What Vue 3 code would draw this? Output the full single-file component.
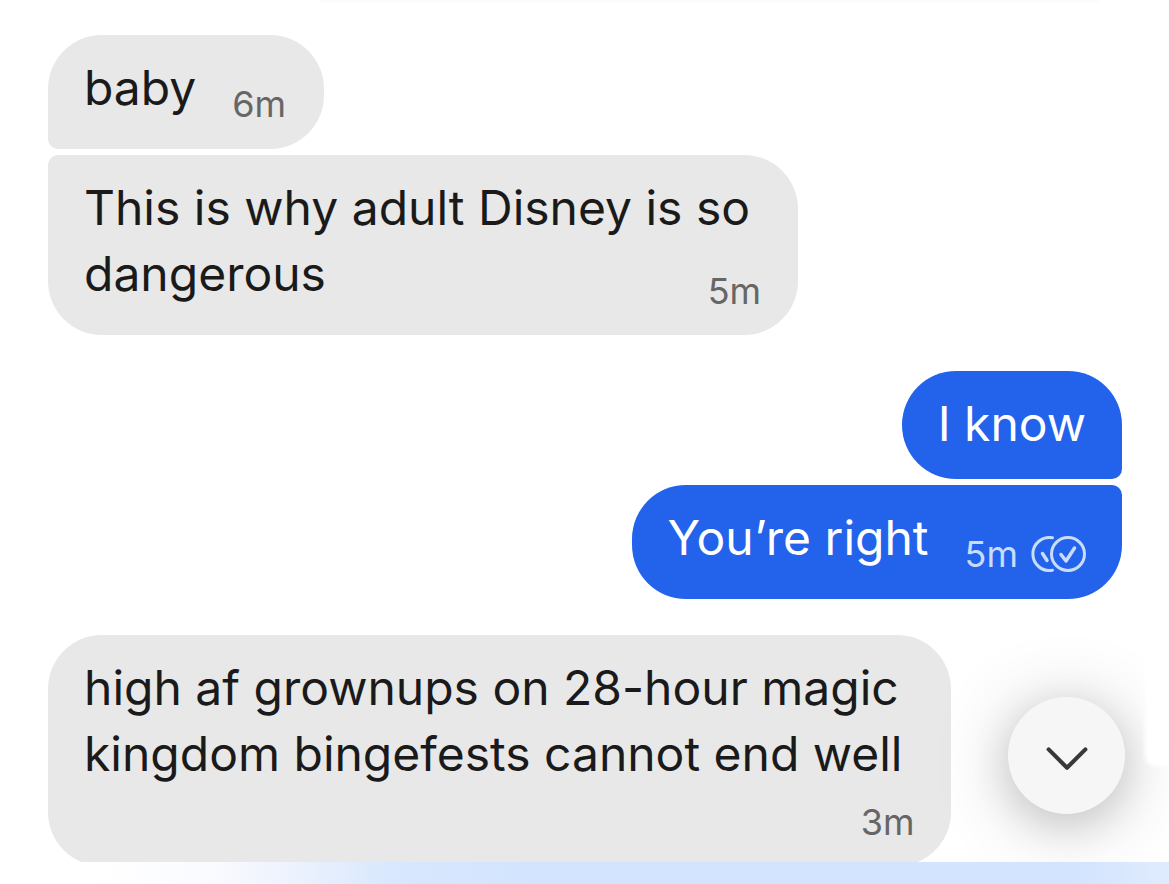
<script setup>
</script>

<template>
  <main class="chat">
    <section class="group in">
      <article class="bubble solo"><p>baby</p><time class="inline">6m</time></article>
      <article class="bubble wide"><p>This is why adult Disney is so<br>dangerous</p><time>5m</time></article>
    </section>
    <section class="group out">
      <article class="bubble blue top"><p>I know</p></article>
      <article class="bubble blue last">
        <p>You’re right</p><time class="inline">5m</time>
        <svg class="ticks" viewBox="0 0 56 36" role="img" aria-label="Read">
          <g fill="none" stroke="currentColor" stroke-width="3" stroke-linecap="round" stroke-linejoin="round">
            <circle cx="38" cy="18" r="16.5" />
            <path d="M22.500 1.800A16.500 16.500 0 1 0 22.500 34.200" />
            <path stroke-width="3.500" d="M12.500 17.500l4.500 7M31 18.500l5 6.500 8.500-13" />
          </g>
        </svg>
      </article>
    </section>
    <section class="group in">
      <article class="bubble long"><p>high af grownups on 28-hour magic<br>kingdom bingefests cannot end well</p><time>3m</time></article>
    </section>
    <button class="down" type="button" aria-label="Scroll to latest">
      <svg viewBox="0 0 48 48"><path d="M6.500 18l18 18 18-18" fill="none" stroke="currentColor" stroke-width="4" stroke-linecap="round" stroke-linejoin="round" /></svg>
    </button>
    <div class="glare"></div>
    <footer class="edge"></footer>
  </main>
</template>

<style>
body { background: #fff; }
</style>
<style scoped>
.chat { position: relative; box-sizing: border-box; height: 100vh; padding: 35px 47px 0 48px; overflow: hidden; display: flex; flex-direction: column; gap: 36px; font-family: Inter, "Noto Sans", sans-serif; color: #1a1a1b; }
.chat::before { content: ""; position: absolute; top: 0; left: 320px; right: 70px; height: 3px; background: #fcfcfc; }
.group { display: flex; flex-direction: column; gap: 6px; align-items: flex-start; }
.out { align-items: flex-end; }
.bubble { position: relative; box-sizing: border-box; display: flex; align-items: flex-start; padding: 20px 38px 28px 36px; background: #e8e8e8; border-radius: 54px; font-size: 48px; line-height: 66px; }
p { margin: 0; white-space: nowrap; }
time { font-size: 36px; line-height: 36px; color: #666; }
.bubble time:not(.inline) { position: absolute; right: 37px; bottom: 26px; }
.bubble .inline { margin: 31px 0 0 36px; }
.solo { border-bottom-left-radius: 10px; padding-bottom: 27px; }
.wide { border-top-left-radius: 10px; padding-right: 48px; }
.blue { background: #2363eb; color: #fff; padding-right: 36px; }
.blue time, .ticks { color: #c8dcfb; }
.top { border-bottom-right-radius: 10px; padding-bottom: 22px; }
.last { border-top-right-radius: 10px; padding-bottom: 27px; }
.ticks { width: 56px; height: 36px; margin: 31px 0 0 12px; }
.long { padding-bottom: 79px; padding-right: 49px; }
.down { position: absolute; right: 44px; bottom: 70px; width: 117px; height: 117px; border: 0; border-radius: 50%; padding: 34px; background: #f6f6f6; color: #38383a; box-shadow: 0 8px 80px #0003, 0 10px 40px #0002; }
.down svg { display: block; width: 100%; }
.glare { position: absolute; right: 0; bottom: 118px; width: 24px; height: 120px; background: #fff; border-bottom-left-radius: 10px; filter: blur(2px); }
.edge { position: absolute; left: 0; right: 0; bottom: 0; height: 22px; background: linear-gradient(90deg, #fff 8%, #fafbff 18%, #edf2fe 25%, #d7e7fd 34%, #d3e4fe 45%, #d3e4fe 92%, #e0ebfd); }
</style>
